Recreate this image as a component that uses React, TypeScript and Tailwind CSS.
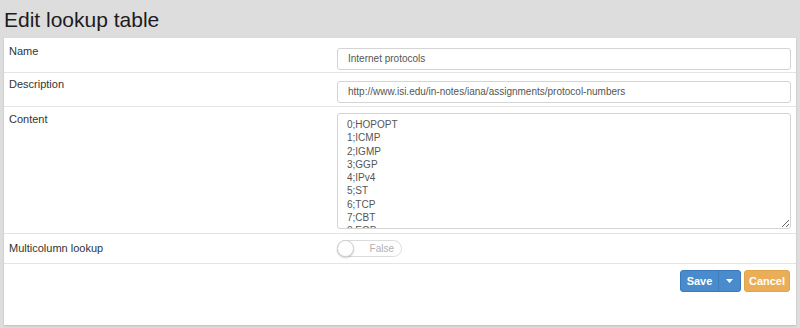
import React from 'react';

const protocols = [
  '0;HOPOPT',
  '1;ICMP',
  '2;IGMP',
  '3;GGP',
  '4;IPv4',
  '5;ST',
  '6;TCP',
  '7;CBT',
  '8;EGP',
  '9;IGP',
  '10;BBN-RCC-MON',
];

const Row: React.FC<{ label: string; children: React.ReactNode; className?: string }> = ({
  label,
  children,
  className = '',
}) => (
  <div className={`grid grid-cols-[333px_1fr] border-b border-[#e4e4e4] pr-[5px] ${className}`}>
    <div className="pl-[5px] text-[11px] leading-[13px] text-[#333]">{label}</div>
    <div>{children}</div>
  </div>
);

export default function App() {
  return (
    <div
      className="h-[328px] w-[800px] overflow-hidden bg-[#dddddd]"
      style={{ fontFamily: '"Liberation Sans", Arial, sans-serif' }}
    >
      <h1 className="h-[38px] pl-[4px] pt-[8px] text-[21px] leading-[24px] text-[#1c1c1c]">
        Edit lookup table
      </h1>
      <div className="mx-[4px] h-[287px] bg-white shadow-[0_1px_2px_rgba(0,0,0,0.15)]">
        <Row label="Name" className="h-[35px] pt-[7px]">
          <input
            readOnly
            value="Internet protocols"
            className="h-[22px] w-full rounded-[3px] border border-[#d4d4d4] px-[10px] text-[10px] text-[#555] outline-none"
          />
        </Row>
        <Row label="Description" className="h-[34px] pt-[5px]">
          <input
            readOnly
            value="http://www.isi.edu/in-notes/iana/assignments/protocol-numbers"
            className="h-[22px] w-full rounded-[3px] border border-[#d4d4d4] px-[10px] text-[10px] text-[#555] outline-none"
          />
        </Row>
        <Row label="Content" className="h-[127px] pt-[6px]">
          <textarea
            readOnly
            defaultValue={protocols.join('\n')}
            className="block h-[116px] w-full resize-y overflow-hidden rounded-[3px] border border-[#d4d4d4] px-[9px] pt-[4px] text-[10px] leading-[13.3px] text-[#555] outline-none"
          />
        </Row>
        <Row label="Multicolumn lookup" className="h-[30px] items-center">
          <div className="flex h-[17px] w-[65px] items-center rounded-full border border-[#dcdcdc] bg-white">
            <span className="-ml-px h-[17px] w-[17px] rounded-full border border-[#cfcfcf] bg-white shadow-[0_1px_2px_rgba(0,0,0,0.2)]" />
            <span className="ml-auto pr-[7px] text-[10px] text-[#b0b0b0]">False</span>
          </div>
        </Row>
        <div className="flex justify-end gap-[3px] pr-[6px] pt-[6px]">
          <div className="flex h-[22px] overflow-hidden rounded-[3px] border border-[#3b78b8] bg-[#4a8bcd] text-[11px] font-bold text-white">
            <span className="flex w-[37px] items-center justify-center">Save</span>
            <span className="flex w-[22px] items-center justify-center border-l border-[#3f7dbd]">
              <svg width="7" height="4" viewBox="0 0 7 4">
                <path d="M0 0h7L3.5 4z" fill="white" />
              </svg>
            </span>
          </div>
          <div className="flex h-[22px] w-[46px] items-center justify-center rounded-[3px] border border-[#e0a44d] bg-[#ebae58] text-[11px] font-bold text-white">
            Cancel
          </div>
        </div>
      </div>
    </div>
  );
}
